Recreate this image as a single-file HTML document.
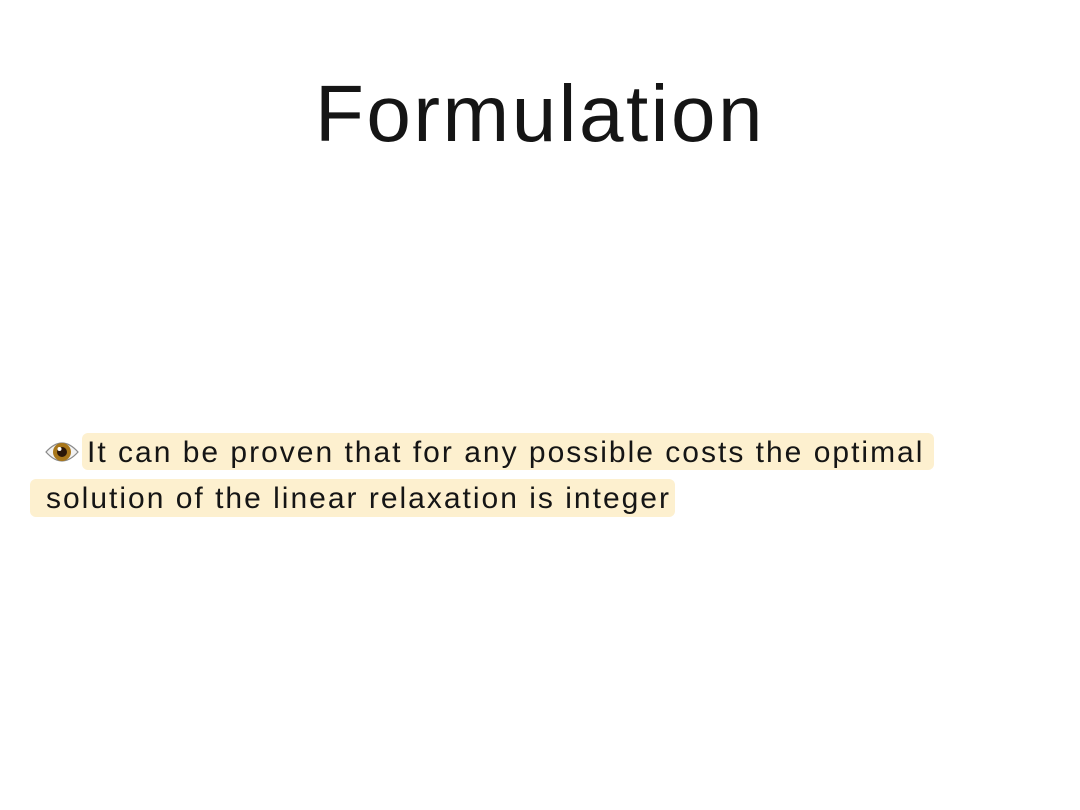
<!DOCTYPE html>
<html><head><meta charset="utf-8"><style>
html,body{margin:0;padding:0;background:#fff;width:1080px;height:810px;overflow:hidden;font-family:"Liberation Sans",sans-serif;color:#111}
.t{position:absolute;left:0;width:1080px;top:64px;text-align:center;font-size:80px;line-height:100px;letter-spacing:2.5px;color:#151515}
.hl{position:absolute;background:#fdf0cf;border-radius:6px}
.tx{position:absolute;font-size:30px;line-height:36px;white-space:nowrap;letter-spacing:2px;color:#151515}
</style></head><body>
<div class="t">Formulation</div>
<div class="hl" style="left:82px;top:433px;width:852px;height:37px"></div>
<div class="hl" style="left:30px;top:479px;width:645px;height:38px"></div>
<svg style="position:absolute;left:45px;top:437px" width="34" height="30" viewBox="0 0 34 30">
<path d="M1 15 Q17 -3 33 15 Q17 33 1 15Z" fill="#f2f2f2" stroke="#8a8a8a" stroke-width="1.2"/>
<circle cx="17" cy="15" r="9" fill="#a8761a"/>
<circle cx="17" cy="15" r="5" fill="#2a1608"/>
<circle cx="14.5" cy="12" r="2" fill="#fff"/>
</svg>
<div class="tx" style="left:87px;top:435px">It can be proven that for any possible costs the optimal</div>
<div class="tx" style="left:46px;top:481px">solution of the linear relaxation is integer</div>
</body></html>
